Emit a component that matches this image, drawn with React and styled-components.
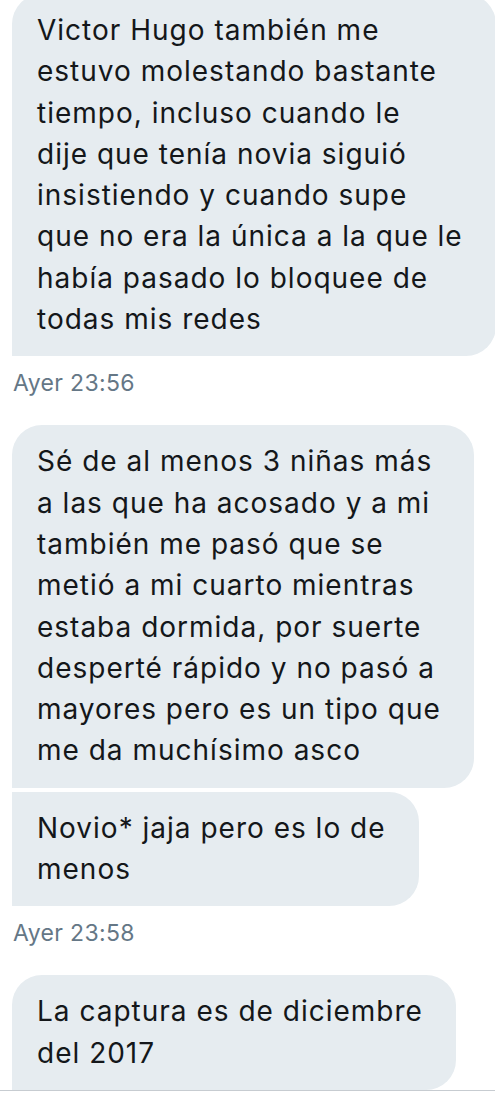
import React from "react";
import styled, { createGlobalStyle } from "styled-components";

const GlobalStyle = createGlobalStyle`
  html, body {
    margin: 0;
    padding: 0;
    background: #ffffff;
    overflow: hidden;
  }
  body {
    font-family: Inter, "Open Sans", "Liberation Sans", sans-serif;
    -webkit-font-smoothing: antialiased;
  }
`;

const Screen = styled.div`
  width: 495px;
  height: 1100px;
  overflow: hidden;
  background: #ffffff;
`;

const Thread = styled.div`
  display: flex;
  flex-direction: column;
  align-items: flex-start;
  padding: 0 0 0 12px;
  margin-top: -6px;
  border-bottom: 1px solid #c7ccd1;
`;

const Group = styled.div`
  display: flex;
  flex-direction: column;
  align-items: flex-start;
  gap: 4px;
  margin-top: ${(p) => (p.$first ? "0" : "28px")};
`;

const Bubble = styled.div`
  background: #e6ecf0;
  color: #14171a;
  font-size: 28px;
  line-height: 41.3px;
  letter-spacing: 1px;
  padding: 16px 33px 16px 25px;
  border-radius: ${(p) => (p.$first ? "30px" : "0")} 30px 30px 0;
  white-space: nowrap;
`;

const Line = styled.span`
  display: block;
`;

const Stamp = styled.div`
  margin-top: 9px;
  margin-left: 1px;
  font-size: 23px;
  line-height: 28px;
  letter-spacing: 0.35px;
  color: #657786;
`;

const groups = [
  {
    time: "Ayer 23:56",
    messages: [
      [
        "Victor Hugo también me",
        "estuvo molestando bastante",
        "tiempo, incluso cuando le",
        "dije que tenía novia siguió",
        "insistiendo y cuando supe",
        "que no era la única a la que le",
        "había pasado lo bloquee de",
        "todas mis redes",
      ],
    ],
  },
  {
    time: "Ayer 23:58",
    messages: [
      [
        "Sé de al menos 3 niñas más",
        "a las que ha acosado y a mi",
        "también me pasó que se",
        "metió a mi cuarto mientras",
        "estaba dormida, por suerte",
        "desperté rápido y no pasó a",
        "mayores pero es un tipo que",
        "me da muchísimo asco",
      ],
      ["Novio* jaja pero es lo de", "menos"],
    ],
  },
  {
    time: null,
    messages: [["La captura es de diciembre", "del 2017"]],
  },
];

export default function App() {
  return (
    <Screen>
      <GlobalStyle />
      <Thread>
        {groups.map((g, gi) => (
          <Group key={gi} $first={gi === 0}>
            {g.messages.map((m, mi) => (
              <Bubble key={mi} $first={mi === 0}>
                {m.map((l, li) => (
                  <Line key={li}>{l}</Line>
                ))}
              </Bubble>
            ))}
            {g.time && <Stamp>{g.time}</Stamp>}
          </Group>
        ))}
      </Thread>
    </Screen>
  );
}
